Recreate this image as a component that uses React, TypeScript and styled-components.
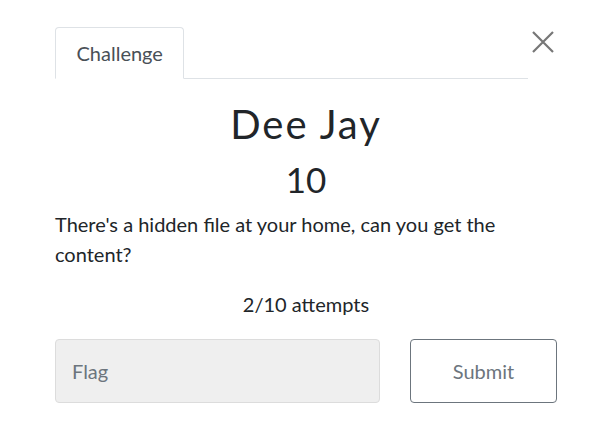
import React from 'react';
import styled, { createGlobalStyle } from 'styled-components';

const GlobalStyle = createGlobalStyle`
  body {
    margin: 0;
    background: #fff;
    font-family: Lato, "Open Sans", sans-serif;
    color: #212529;
  }
`;

const Modal = styled.div`
  width: 502px;
  padding: 27px 0 0 55px;
`;

const Header = styled.div`
  display: flex;
  align-items: flex-start;
`;

const Tabs = styled.nav`
  flex: 1;
  display: flex;
  border-bottom: 1px solid #dee2e6;
`;

const Tab = styled.div<{ active?: boolean }>`
  padding: 0 20.5px;
  height: 50px;
  display: flex;
  align-items: center;
  font-size: 20px;
  color: #495057;
  border: 1px solid ${({ active }) => (active ? '#dee2e6' : 'transparent')};
  border-bottom-color: ${({ active }) => (active ? '#fff' : 'transparent')};
  border-radius: 4px 4px 0 0;
  margin-bottom: -1px;
  background: #fff;
`;

const Close = styled.button`
  width: 29px;
  height: 29px;
  padding: 0;
  border: 0;
  background: none;
  display: flex;
  align-items: center;
  justify-content: center;
  color: #777;
`;

const Title = styled.h1`
  margin: 21px 0 0;
  text-align: center;
  font-size: 40px;
  font-weight: 400;
  letter-spacing: 2px;
  line-height: 48px;
`;

const Points = styled.h2`
  margin: 10px 0 0;
  text-align: center;
  font-size: 35px;
  font-weight: 400;
  line-height: 42px;
`;

const Description = styled.p`
  margin: 9px 0 0;
  font-size: 20px;
  line-height: 30px;
`;

const Attempts = styled.p`
  margin: 20px 0 0;
  text-align: center;
  font-size: 20px;
  line-height: 30px;
`;

const Form = styled.div`
  display: flex;
  gap: 30px;
  margin-top: 20px;
`;

const Input = styled.input`
  flex: 1;
  height: 64px;
  box-sizing: border-box;
  padding: 0 16px;
  font-family: inherit;
  font-size: 20px;
  background: #efefef;
  border: 1px solid #dcdcdc;
  border-radius: 4px;
  outline: none;
  &::placeholder {
    color: #6c757d;
  }
`;

const Submit = styled.button`
  width: 147px;
  height: 64px;
  font-family: inherit;
  font-size: 20px;
  color: #6c757d;
  background: #fff;
  border: 1px solid #6c757d;
  border-radius: 4px;
`;

export default function App() {
  return (
    <>
      <GlobalStyle />
      <Modal>
        <Header>
          <Tabs>
            <Tab active>Challenge</Tab>
          </Tabs>
          <Close aria-label="Close">
            <svg width="22" height="22" viewBox="0 0 22 22">
              <path d="M1 1L21 21M21 1L1 21" stroke="currentColor" strokeWidth="2.2" />
            </svg>
          </Close>
        </Header>
        <Title>Dee Jay</Title>
        <Points>10</Points>
        <Description>
          There's a hidden file at your home, can you get the content?
        </Description>
        <Attempts>2/10 attempts</Attempts>
        <Form>
          <Input placeholder="Flag" />
          <Submit>Submit</Submit>
        </Form>
      </Modal>
    </>
  );
}
